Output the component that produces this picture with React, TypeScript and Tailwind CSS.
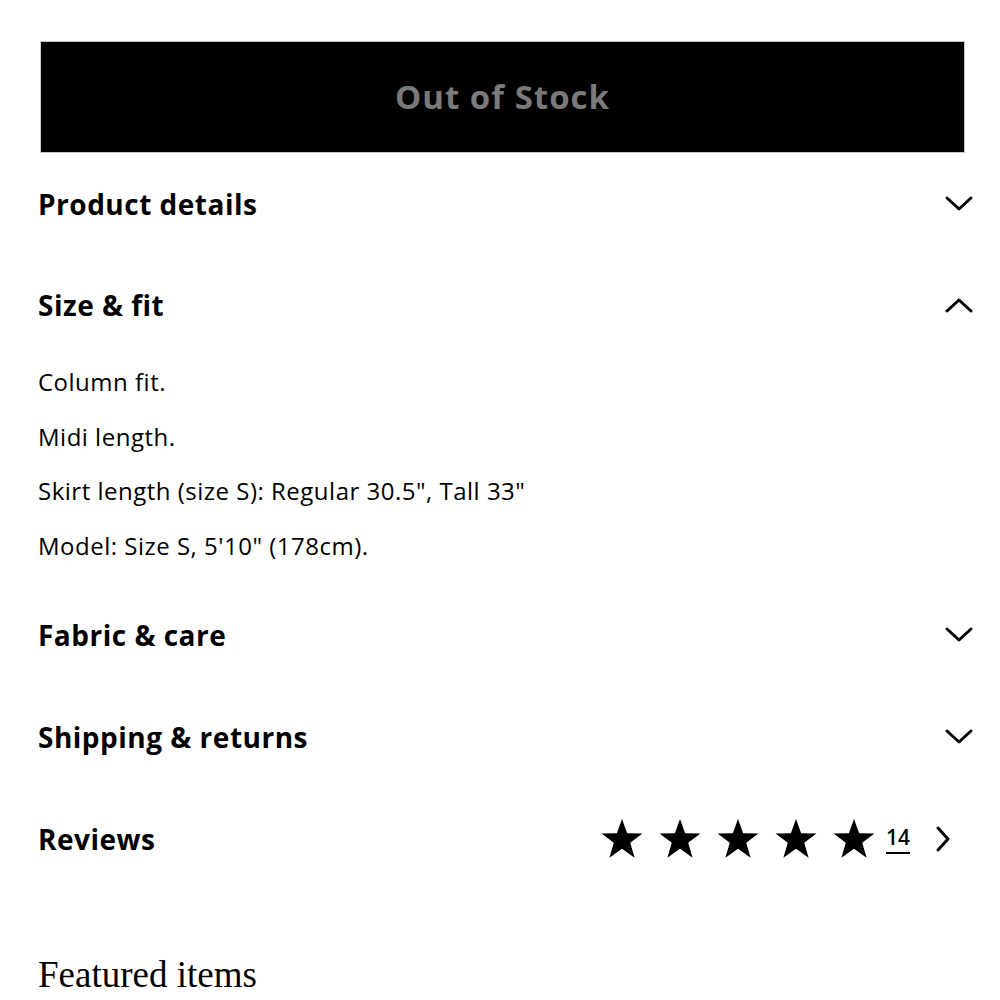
import React from "react";

const sans = { fontFamily: "'Open Sans', 'Noto Sans', sans-serif" };

function ChevronDown() {
  return (
    <svg width="30" height="18" viewBox="0 0 30 18" fill="none" stroke="black" strokeWidth="3" strokeLinecap="round" strokeLinejoin="round">
      <path d="M3 3 L15 14 L27 3" />
    </svg>
  );
}
function ChevronUp() {
  return (
    <svg width="30" height="18" viewBox="0 0 30 18" fill="none" stroke="black" strokeWidth="3" strokeLinecap="round" strokeLinejoin="round">
      <path d="M3 15 L15 4 L27 15" />
    </svg>
  );
}
function Star() {
  return (
    <svg width="44" height="42" viewBox="0 0 24 23" fill="black">
      <path d="M12 0.5 L14.8 8.3 L23.2 8.5 L16.5 13.6 L18.9 21.7 L12 16.9 L5.1 21.7 L7.5 13.6 L0.8 8.5 L9.2 8.3 Z" />
    </svg>
  );
}

function Row({ title, open }: { title: string; open?: boolean }) {
  return (
    <div className={`flex items-center justify-between pr-[26px] ${open ? "h-[100px]" : "h-[102px]"}`}>
      <span className="text-[28px] font-bold text-black leading-none tracking-[0.5px]">{title}</span>
      {open ? <ChevronUp /> : <ChevronDown />}
    </div>
  );
}

export default function App() {
  return (
    <div className="w-[1000px] h-[1000px] bg-white overflow-hidden pt-[41px]" style={sans}>
      <div className="ml-[40px] w-[925px] h-[112px] bg-black border border-[#c8c8c8] flex items-center justify-center">
        <span className="text-[33px] font-bold text-[#7a7a7a] tracking-[1px]">Out of Stock</span>
      </div>
      <div className="pl-[38px]">
        <Row title="Product details" />
        <Row title="Size & fit" open />
        <div className="text-[24px] leading-[54.5px] text-black mb-[11px] tracking-[0.5px]">
          <p>Column fit.</p>
          <p>Midi length.</p>
          <p>Skirt length (size S): Regular 30.5", Tall 33"</p>
          <p>Model: Size S, 5'10" (178cm).</p>
        </div>
        <Row title="Fabric & care" />
        <Row title="Shipping & returns" />
        <div className="flex items-center justify-between h-[102px] pr-[48px]">
          <span className="text-[28px] font-bold text-black leading-none tracking-[0.5px]">Reviews</span>
          <div className="flex items-center">
            <div className="flex items-center gap-[14px]">
              <Star />
              <Star />
              <Star />
              <Star />
              <Star />
            </div>
            <span className="ml-[10px] text-[21px] font-semibold text-black border-b-2 border-black leading-[26px] pb-[2px]">14</span>
            <svg className="ml-[24px]" width="18" height="30" viewBox="0 0 18 30" fill="none" stroke="black" strokeWidth="3" strokeLinecap="round" strokeLinejoin="round">
              <path d="M4 4 L14 15 L4 26" />
            </svg>
          </div>
        </div>
        <h2 className="mt-[64px] text-[37px] leading-[42px] text-black" style={{ fontFamily: "'Liberation Serif', serif" }}>
          Featured items
        </h2>
      </div>
    </div>
  );
}
